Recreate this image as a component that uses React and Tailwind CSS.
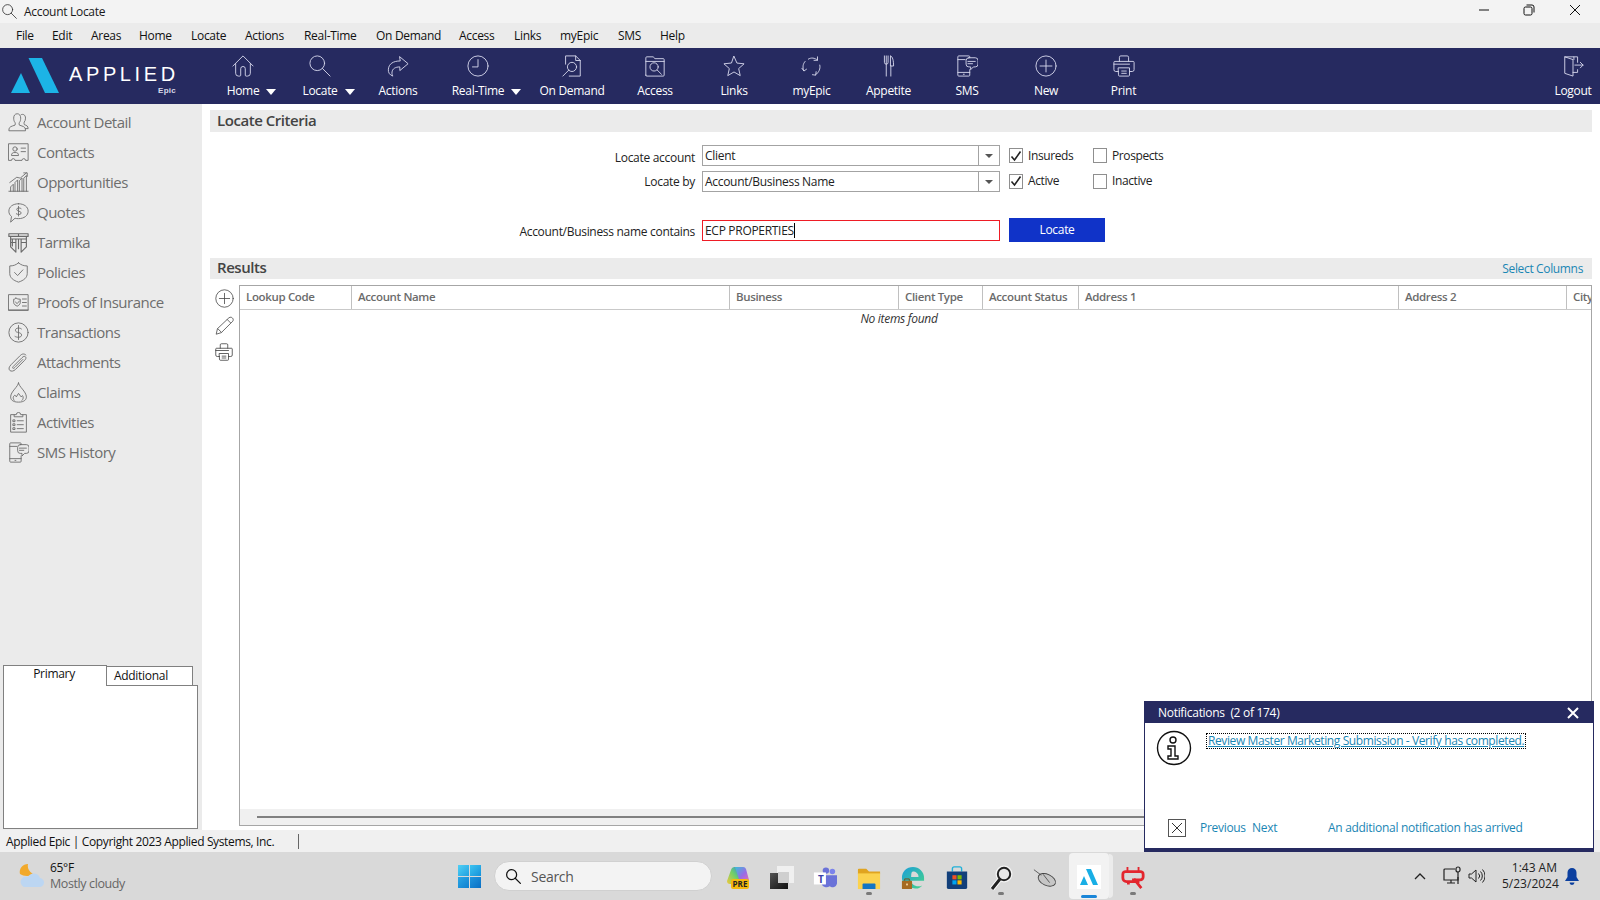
import React from 'react';

const S = ({ s = 24, className = '', sw = 1.1, vb = 24, children }) => (
  <svg width={s} height={s} viewBox={`0 0 ${vb} ${vb}`} fill="none" stroke="currentColor" strokeWidth={sw} strokeLinecap="round" strokeLinejoin="round" className={className}>
    {children}
  </svg>
);

const IHome = (p) => <S {...p}><path d="M1 12 12 1l11 11M4 9.500V20a3 3 0 0 0 3 3h1.500a1 1 0 0 0 1-1v-7a2.500 2.500 0 0 1 5 0v7a1 1 0 0 0 1 1H17a3 3 0 0 0 3-3V9.500" /></S>;
const ISearch = (p) => <S {...p}><circle cx="9" cy="9" r="8" /><path d="M14.700 14.700 23 23" /></S>;
const IShare = (p) => <S {...p}><path d="M14 2l9 7.500-9 7.500v-4c-5 0-8 2-8.500 5.500-.3 2 .2 3.500 1 4.500-3.500-1-5.500-4-5-7.500C2 9.500 7 6.500 14 6.500z" /></S>;
const IClock = (p) => <S {...p}><circle cx="12" cy="12" r="11" /><path d="M12 5v8H6" /></S>;
const IDocSearch = (p) => <S {...p}><path d="M5 10V1h11l5 5v17H9" /><path d="M16 1v5h5" /><circle cx="12" cy="13" r="5" /><path d="M8.500 16.500 2 23" /></S>;
const IFolderSearch = (p) => <S {...p}><path d="M2 22V3a1 1 0 0 1 1-1h7l2 2h9a1 1 0 0 1 1 1v17a1 1 0 0 1-1 1H3a1 1 0 0 1-1-1zM2 7h20" /><circle cx="11" cy="13" r="4.500" /><path d="M14.500 16.500 19 21" /></S>;
const IStar = (p) => <S {...p}><path d="M12 1.500l3.200 7.300 7.800.8-5.900 5.200 1.700 7.700-6.800-4-6.800 4 1.700-7.700L1 9.600l7.800-.8z" /></S>;
const ICycle = (p) => <S {...p}><path d="M8 4.500C11 2.500 15 3 18 5.500M18 2v3.800h-3.800M3 17c-1.500-3.500-1-7.500 1.500-10M1 14.500 3.200 17.500 6 15.500M20.500 11c1 4-1 8-4.500 10.500M12.500 21.500l3.500.5.500-3.800" /></S>;
const IFork = (p) => <S {...p}><path d="M7 1v7a2 2 0 0 0 4 0V1M9 1v22M14 1c2 1 3 5 3 11h-3zM14 12v11" /></S>;
const ISms = (p) => <S {...p}><path d="M15 3V2a1 1 0 0 0-1-1H3a1 1 0 0 0-1 1v20a1 1 0 0 0 1 1h11a1 1 0 0 0 1-1v-6M2 5h8M2 19h13M8 21h1" /><path d="M14 3h7a3 3 0 0 1 3 3v4a3 3 0 0 1-3 3h-2l-3 3v-3h-2a3 3 0 0 1-3-3V6a3 3 0 0 1 3-3zM13 7h8M13 9.500h5" /></S>;
const IPlus = (p) => <S {...p}><circle cx="12" cy="12" r="11" /><path d="M12 5.500v13M5.500 12h13" /></S>;
const IPrint = (p) => <S {...p}><path d="M7 7V2.500a1.500 1.500 0 0 1 1.500-1.500h7A1.500 1.500 0 0 1 17 2.500V7" /><path d="M6 18H3a2 2 0 0 1-2-2V8a1 1 0 0 1 1-1h20a1 1 0 0 1 1 1v8a2 2 0 0 1-2 2h-3M1 10h17" /><path d="M6 14h12v8a1 1 0 0 1-1 1H7a1 1 0 0 1-1-1zM9.500 17.500h5M9.500 20h5" /></S>;
const ILogout = (p) => <S {...p}><path d="M13 5V2H3v18l9 3V5L3 2M12 19h5v-3M17 8V2h-4M14 11h9M20 8l3 3-3 3" /></S>;

const IUsers = (p) => <S {...p}><path d="M1 21c0-3 1-4 4-5l3-1c.5-1 .5-2 0-3-1-1-1.500-3-1.500-5C6.500 4 8 2 10.500 2S14.500 4 14.500 7c0 2-.5 4-1.500 5-.5 1-.5 2 0 3l3 1c3 1 4 2 4 5zM15 3c2-1 5 0 5 4 0 2-.5 3.500-1.500 4.500-.3 1-.2 2 .2 3 2.500.8 4.300 1.500 4.300 4.500h-3" /></S>;
const IContact = (p) => <S {...p}><path d="M1 2h22v19h-3a2 2 0 0 0-4 0H8a2 2 0 0 0-4 0H1z" /><circle cx="8" cy="8" r="2.500" /><path d="M4 15c0-2 1-3 4-3s4 1 4 3zM15 7h5M15 11h5" /></S>;
const IChart = (p) => <S {...p}><path d="M1 22h22M3 22v-5l3-3v8M8 22V12l3-3v13M13 22V10l3-3v15M18 22V7l3-3v18M2 12 10 6l4 1 7-6M18 1h4v4" /></S>;
const IQuote = (p) => <S {...p}><path d="M12 2c6.500 0 11 3.500 11 8.500S18.500 19 12 19c-1.500 0-2.500 0-4-.5L3 23l1-6.500C2 15 1 13 1 10.500 1 5.500 5.500 2 12 2z" /><path d="M15 7.500c-1-1-5-1.500-5 1 0 2.500 5 1.500 5 4s-4 2-5.500 1M12 5v11" /></S>;
const ITarmika = (p) => <S {...p} sw={1.3}><path d="M1 2h22v3H1zM3 5v3h18V5M3 8v9l6 6V8M5 8v8M12 8v11M21 8v9l-6 6V8M15 12h6M3 12h6M12 5V2" /></S>;
const IShield = (p) => <S {...p}><path d="M12 1c3 2.500 6 3.500 10 3.500V13c0 5-4 8-10 10C6 21 2 18 2 13V4.500C6 4.500 9 3.500 12 1z" /><path d="M7.500 12l3.500 3.500 6-6.500" /></S>;
const IProof = (p) => <S {...p}><path d="M1 3h22v18H1zM1 20.500h22" /><path d="M9 7c1.500 1 3 1.200 5 1.200v4c0 2-2 3.300-3.500 4-1.500-.7-4-2-4-4v-4C8 8.200 8 8 9 7z" /><path d="M8.500 11.500l2 1.800 2.500-3M16.500 8H21M16.500 12H21M16.500 16H21" /></S>;
const IDollar = (p) => <S {...p}><circle cx="12" cy="12" r="11" /><path d="M15.500 8c-1-1.500-7-2-7 1.500 0 3.500 7 1.500 7 5.500 0 3-5.500 3-7.500 1.500M12 4v16" /></S>;
const IClip = (p) => <S {...p}><path d="M20.500 3.500c-2-2-4.500-1.500-6.500.5L3.500 14.500c-2.500 2.500-3 5-1.500 6.500s4.500 1 6.500-1L19 9.500c1.500-1.500 2-3 1-4s-2.500-.5-4 1L6.500 16c-1 1-1.500 2-1 2.500s1.500 0 2.500-1l9-9" /></S>;
const IFlame = (p) => <S {...p}><path d="M12 1c0 4-9 10-9 16 0 3 2 6 9 6s9-3 9-6c0-6-9-12-9-16z" /><path d="M7 21c-2-3-1-5 1-6l1.500 2 2.500-4 3 4 1.500-1.500c1.500 2 1 4-.5 5.500" /></S>;
const IList = (p) => <S {...p}><path d="M7 3H3v20h18V3h-4M7 5V3h2.500a2.500 2.500 0 0 1 5 0H17v2zM6 9h2v2H6zM6 13.500h2v2H6zM6 18h2v2H6zM10.500 10h7M10.500 14.500h7M10.500 19h7" /></S>;
const IPencil = (p) => <S {...p}><path d="M18 2c1.500-1 3-.5 4 .5s1.500 2.500.5 4L8 21l-6.500 2L3 16.500zM15.500 4.500l4 4M3.500 16l4.500 4.500" /></S>;

const menu = [
  ['File', 'w-[36px]'], ['Edit', 'w-[39px]'], ['Areas', 'w-[48px]'], ['Home', 'w-[52px]'], ['Locate', 'w-[54px]'], ['Actions', 'w-[59px]'],
  ['Real-Time', 'w-[72px]'], ['On Demand', 'w-[83px]'], ['Access', 'w-[55px]'], ['Links', 'w-[46px]'], ['myEpic', 'w-[58px]'], ['SMS', 'w-[42px]'], ['Help', 'w-[40px]'],
];

const nav = [
  ['Home', IHome, 'w-[76px]', true], ['Locate', ISearch, 'w-[78px]', true], ['Actions', IShare, 'w-[78px]'], ['Real-Time', IClock, 'w-[82px]', true],
  ['On Demand', IDocSearch, 'w-[106px]'], ['Access', IFolderSearch, 'w-[60px]'], ['Links', IStar, 'w-[98px]'], ['myEpic', ICycle, 'w-[57px]'],
  ['Appetite', IFork, 'w-[97px]'], ['SMS', ISms, 'w-[60px]'], ['New', IPlus, 'w-[98px]'], ['Print', IPrint, 'w-[57px]'],
];

const side = [
  ['Account Detail', IUsers], ['Contacts', IContact], ['Opportunities', IChart], ['Quotes', IQuote], ['Tarmika', ITarmika], ['Policies', IShield],
  ['Proofs of Insurance', IProof], ['Transactions', IDollar], ['Attachments', IClip], ['Claims', IFlame], ['Activities', IList], ['SMS History', ISms],
];

const cols = [
  ['Lookup Code', 'w-[112px]'], ['Account Name', 'w-[378px]'], ['Business', 'w-[169px]'], ['Client Type', 'w-[84px]'], ['Account Status', 'w-[96px]'],
  ['Address 1', 'w-[320px]'], ['Address 2', 'w-[168px]'],
];

const Check = ({ on, label, w }) => (
  <div className={`flex items-center gap-[5px] ${w}`}>
    <span className="w-[14px] h-[15px] border border-[#8f8f8f] bg-white flex items-center justify-center shrink-0">
      {on && <svg width="12" height="12" viewBox="0 0 12 12" fill="none" stroke="#222" strokeWidth="1.6"><path d="M1.500 6.500 4.500 10 10.500 1.500" /></svg>}
    </span>
    <span className="tracking-[-0.4px]">{label}</span>
  </div>
);

const Combo = ({ value }) => (
  <div className="w-[298px] h-[21px] border border-[#a3a3a3] bg-white flex items-center">
    <span className="flex-1 pl-[2px]">{value}</span>
    <span className="w-[21px] h-full border-l border-[#a3a3a3] flex items-center justify-center">
      <span className="w-0 h-0 border-l-[4px] border-r-[4px] border-t-[4px] border-l-transparent border-r-transparent border-t-[#555]" />
    </span>
  </div>
);

const Win11 = () => (
  <div className="grid grid-cols-2 gap-[1px] w-[23px] h-[23px]">
    <span className="bg-gradient-to-br from-[#4fd0f5] to-[#1fa0e0]" />
    <span className="bg-gradient-to-br from-[#3cc3f0] to-[#1592da]" />
    <span className="bg-gradient-to-br from-[#2ba8e6] to-[#0f7fcf]" />
    <span className="bg-gradient-to-br from-[#2096de] to-[#0a6fc4]" />
  </div>
);

const TaskIcon = ({ w, dot, children }) => (
  <div className={`${w} h-full flex flex-col items-center pt-[13px] relative`}>
    <div className="w-[24px] h-[25px] flex items-center justify-center">{children}</div>
    {dot && <span className="absolute bottom-[5px] w-[6px] h-[3px] rounded-full bg-[#7a7a7a]" />}
  </div>
);

export default function App() {
  return (
    <div className="relative w-[1600px] h-[900px] overflow-hidden flex flex-col bg-white text-[12px] text-[#222] tracking-[-0.3px] font-['Open_Sans',sans-serif]">
      {/* title bar */}
      <div className="h-[23px] bg-[#f3f3f3] flex items-center shrink-0">
        <ISearch s={15} sw={1.3} className="ml-[2px] text-[#333]" />
        <span className="ml-[7px] text-[#1a1a1a]">Account Locate</span>
        <div className="ml-auto flex items-center text-[#111] -mt-[3px]">
          <svg width="12" height="12" viewBox="0 0 12 12" stroke="currentColor" className="mr-[33px]"><path d="M1 6h10" /></svg>
          <svg width="12" height="12" viewBox="0 0 12 12" fill="none" stroke="currentColor" className="mr-[34px]"><rect x="1" y="3" width="8" height="8" rx="1.500" /><path d="M3.500 1h5.500a2 2 0 0 1 2 2v5.500" /></svg>
          <svg width="12" height="12" viewBox="0 0 12 12" stroke="currentColor" className="mr-[19px]"><path d="M1 1l10 10M11 1 1 11" /></svg>
        </div>
      </div>
      {/* menu */}
      <div className="h-[25px] bg-[#ebebeb] flex items-center pl-[16px] shrink-0 text-[#111]">
        {menu.map(([t, w]) => <span key={t} className={w}>{t}</span>)}
      </div>
      {/* nav */}
      <div className="h-[56px] bg-[#262a60] flex text-white shrink-0">
        <div className="w-[205px] relative shrink-0">
          <svg width="60" height="40" viewBox="0 0 60 40" className="absolute left-[0px] top-[8px]">
            <path d="M11 37 L21 17 L30 37Z" fill="#1cb4e6" />
            <path d="M28.500 2 H42 L59 37 H45Z" fill="#1cb4e6" />
          </svg>
          <span className="absolute left-[69px] top-[13px] text-[20px] leading-[26px] tracking-[3.6px] font-['Liberation_Sans',sans-serif]">APPLIED</span>
          <span className="absolute left-[158px] top-[37px] text-[8px] leading-[12px] font-bold text-[#d8d8e8] tracking-[0.3px] font-['Liberation_Sans',sans-serif]">Epic</span>
        </div>
        {nav.map(([t, Icon, w, caret]) => (
          <div key={t} className={`${w} shrink-0 flex flex-col items-center relative`}>
            <div className="h-[35px] flex items-center pt-[3px] pb-[2px] text-[#d6d8ec]"><Icon s={22} sw={1} /></div>
            <span className="leading-[16px] relative text-white">
              {t}
              {caret && <span className="absolute left-full ml-[7px] top-[6px] w-0 h-0 border-l-[5px] border-r-[5px] border-t-[6px] border-l-transparent border-r-transparent border-t-white" />}
            </span>
          </div>
        ))}
        <div className="ml-auto w-[54px] flex flex-col items-center">
          <div className="h-[35px] flex items-center pt-[3px] pb-[2px] text-[#d6d8ec]"><ILogout s={22} sw={1} /></div>
          <span className="leading-[16px]">Logout</span>
        </div>
      </div>
      {/* body */}
      <div className="flex-1 flex min-h-0">
        <aside className="w-[202px] bg-[#ebebeb] flex flex-col shrink-0">
          <div className="pt-[3px] flex flex-col">
            {side.map(([t, Icon]) => (
              <div key={t} className="h-[30px] flex items-center pl-[8px] text-[#6e6e6e]">
                <Icon s={21} sw={1} className="text-[#6a6a6a] shrink-0" />
                <span className="ml-[8px] text-[15px] tracking-[-0.5px]">{t}</span>
              </div>
            ))}
          </div>
          <div className="mt-auto mb-[1px] pl-[3px]">
            <div className="flex items-end h-[21px] relative z-10 -mb-[1px]">
              <div className="w-[104px] h-[21px] bg-white border border-b-0 border-[#808080] text-center leading-[15px] text-[#111] pr-[2px]">Primary</div>
              <div className="w-[86px] h-[20px] bg-white border border-l-0 border-[#808080] pl-[7px] leading-[17px] text-[#111]">Additional</div>
            </div>
            <div className="w-[195px] h-[144px] bg-white border border-[#808080]" />
          </div>
        </aside>
        <main className="flex-1 flex flex-col px-[8px] pt-[6px] pb-[4px] min-w-0">
          <div className="h-[22px] bg-[#ebebeb] flex items-center pl-[7px] pb-[2px] text-[15px] font-semibold text-[#444] shrink-0 tracking-[-0.45px]">Locate Criteria</div>
          <div className="pt-[13px] flex flex-col shrink-0">
            <div className="flex h-[21px] items-center">
              <span className="w-[485px] text-right pt-[4px]">Locate account</span>
              <div className="ml-[7px]"><Combo value="Client" /></div>
              <div className="ml-[9px] flex"><Check on label="Insureds" w="w-[84px]" /><Check label="Prospects" w="w-[90px]" /></div>
            </div>
            <div className="flex h-[21px] items-center mt-[5px]">
              <span className="w-[485px] text-right">Locate by</span>
              <div className="ml-[7px]"><Combo value="Account/Business Name" /></div>
              <div className="ml-[9px] flex -mt-[1px]"><Check on label="Active" w="w-[84px]" /><Check label="Inactive" w="w-[90px]" /></div>
            </div>
            <div className="flex items-center mt-[26px] h-[24px]">
              <span className="w-[485px] text-right pt-[3px]">Account/Business name contains</span>
              <div className="ml-[7px] w-[298px] h-[21px] border border-[#ee1c25] flex items-center pl-[2px] pt-[1px]">
                <span>ECP PROPERTIES</span><span className="w-px h-[15px] bg-black" />
              </div>
              <div className="ml-[9px] w-[96px] h-[24px] bg-[#1033c8] text-white flex items-center justify-center">Locate</div>
            </div>
          </div>
          <div className="mt-[16px] h-[21px] bg-[#ebebeb] flex items-center pl-[7px] pr-[9px] pb-[2px] shrink-0">
            <span className="text-[15px] font-semibold text-[#444] tracking-[-0.45px]">Results</span>
            <span className="ml-auto mt-[2px] text-[#1a86b4] tracking-[-0.35px]">Select Columns</span>
          </div>
          <div className="mt-[6px] flex-1 flex min-h-0">
            <div className="w-[29px] shrink-0 flex flex-col items-center pr-[1px] text-[#444]">
              <IPlus s={19} sw={1} className="mt-[4px]" />
              <IPencil s={19} sw={1} className="mt-[8px]" />
              <IPrint s={18} sw={1.1} className="mt-[8px]" />
            </div>
            <div className="flex-1 border border-[#a6a6a6] flex flex-col overflow-hidden">
              <div className="h-[24px] border-b border-[#c9c9c9] flex items-center shrink-0 font-semibold text-[#6b6b6b] text-[11.5px] tracking-[-0.35px]">
                {cols.map(([t, w]) => (
                  <div key={t} className={`${w} h-full shrink-0 border-r border-[#c0c0c0] pl-[6px] pb-[1px] flex items-center`}>{t}</div>
                ))}
                <div className="flex-1 pl-[6px] pb-[1px] overflow-hidden">City</div>
              </div>
              <div className="w-[1318px] text-center italic text-[#333] leading-[15px] pt-[1px]">No items found</div>
              <div className="mt-auto h-[16px] bg-[#f0f0f0] flex items-center pl-[17px]">
                <div className="h-[2px] w-[1100px] bg-[#808080]" />
              </div>
            </div>
          </div>
        </main>
      </div>
      {/* status */}
      <div className="h-[21px] bg-[#f0f0f0] border-b border-[#a8a8a8] flex items-center pl-[6px] pt-[1px] shrink-0 text-[#111] box-content -mb-px">
        <span className="w-[292px] tracking-[-0.36px]">Applied Epic | Copyright 2023 Applied Systems, Inc.</span>
        <span className="w-px h-[15px] bg-[#666]" />
      </div>
      {/* taskbar */}
      <div className="h-[48px] bg-[#d9d9d9] flex items-stretch shrink-0 relative">
        <div className="w-[441px] flex items-center pl-[19px] shrink-0">
          <svg width="25" height="26" viewBox="0 0 25 26">
            <path d="M9 1a8 8 0 0 0-8 10c2 1 4 2 7 2a8 8 0 0 0 6-2A9 9 0 0 1 9 1z" fill="#f2a92b" />
            <path d="M5 24h15a4.500 4.500 0 0 0 1-9 6.500 6.500 0 0 0-12-1 5 5 0 0 0-4 10z" fill="#bcd6f2" />
          </svg>
          <div className="ml-[6px] flex flex-col leading-[16px]">
            <span className="text-[#111]">65°F</span>
            <span className="text-[12.5px] text-[#666] tracking-[-0.4px]">Mostly cloudy</span>
          </div>
        </div>
        <div className="w-[53px] flex items-center justify-center pl-[9px] pr-[5px] shrink-0"><Win11 /></div>
        <div className="my-[9px] w-[218px] h-[30px] rounded-full bg-[#f3f3f3] border border-[#d0d0d0] flex items-center pl-[11px] shrink-0 text-[14px] text-[#555]">
          <ISearch s={15} sw={2} className="text-[#111]" />
          <span className="ml-[10px]">Search</span>
        </div>
        <div className="ml-[4px] flex">
          <TaskIcon w="w-[44px]">
            <svg width="24" height="18" viewBox="0 0 24 18" className="-mt-[6px]">
              <defs>
                <linearGradient id="cp" x1="0" y1="0" x2="1" y2="1"><stop offset="0" stopColor="#35c4d8" /><stop offset="0.55" stopColor="#9a6be6" /><stop offset="1" stopColor="#f06fa8" /></linearGradient>
                <linearGradient id="cp2" x1="0" y1="1" x2="1" y2="0"><stop offset="0" stopColor="#f0c93a" /><stop offset="0.55" stopColor="#6fcf6a" /><stop offset="1" stopColor="#2d8be0" /></linearGradient>
              </defs>
              <path d="M8 1h9a3 3 0 0 1 3 2l3 11a3 3 0 0 1-3 3h-7z" fill="url(#cp)" />
              <path d="M5 4a4 4 0 0 1 4-3l5 15a2 2 0 0 1-2 2H4a3 3 0 0 1-3-3z" fill="url(#cp2)" />
            </svg>
            <span className="absolute top-[27px] left-[15px] w-[18px] h-[10px] rounded-[2px] bg-[#f5b90f] text-[8px] leading-[10px] text-center font-bold text-[#222] tracking-normal">PRE</span>
          </TaskIcon>
          <TaskIcon w="w-[43px]">
            <div className="relative w-[24px] h-[23px]">
              <div className="absolute right-0 top-0 w-[17px] h-[17px] bg-[#f0f0f0]" />
              <div className="absolute left-0 bottom-0 w-[18px] h-[16px] bg-gradient-to-br from-[#555] to-[#111]" />
              <div className="absolute left-[8px] top-[6px] w-[11px] h-[11px] bg-[#cfcfcf]" />
            </div>
          </TaskIcon>
          <TaskIcon w="w-[44px]">
            <svg width="26" height="26" viewBox="0 0 26 26">
              <circle cx="21" cy="6" r="3" fill="#7b83eb" />
              <circle cx="14" cy="5" r="3.500" fill="#6a72d8" />
              <path d="M9 10h17v9a5 5 0 0 1-8 3 6 6 0 0 1-9-3z" fill="#6a72d8" />
              <rect x="1" y="7" width="13" height="13" fill="#fff" />
            </svg>
            <span className="absolute top-[21px] left-[15px] w-[10px] text-[10px] leading-[12px] font-bold text-[#3a41a8] tracking-normal">T</span>
          </TaskIcon>
          <TaskIcon w="w-[44px]" dot>
            <svg width="26" height="26" viewBox="0 0 26 26">
              <path d="M1 4a1 1 0 0 1 1-1h8l3 3h12v3H1z" fill="#e0a420" />
              <path d="M1 8h24v17H1z" fill="#fbd24e" />
              <path d="M7 19h12a1 1 0 0 1 1 1v5H6v-5a1 1 0 0 1 1-1z" fill="#1275c4" />
            </svg>
          </TaskIcon>
          <TaskIcon w="w-[44px]">
            <svg width="26" height="26" viewBox="0 0 26 26">
              <defs><linearGradient id="ed" x1="0" y1="0" x2="1" y2="1"><stop offset="0" stopColor="#1c9fd8" /><stop offset="1" stopColor="#46d38a" /></linearGradient></defs>
              <path d="M13 1a12 12 0 0 1 12 12v3H11c0 3 3 6 8 6 2 0 3-.5 4-1-2 3-6 4-9 3C6 23 1 18 1 13 1 6 6 1 13 1z" fill="url(#ed)" />
              <path d="M13 6c3 0 6 2 6 6h-8c0-2 0-6 2-6z" fill="#d9d9d9" />
              <rect x="1" y="16" width="11" height="9" rx="1" fill="#a56a22" />
              <path d="M4 16v-2h5v2" stroke="#7a4b14" fill="none" />
              <rect x="5.500" y="19" width="2" height="2" fill="#f2d19a" />
            </svg>
          </TaskIcon>
          <TaskIcon w="w-[44px]">
            <svg width="26" height="26" viewBox="0 0 26 26">
              <path d="M8 6V3a2 2 0 0 1 2-2h6a2 2 0 0 1 2 2v3" stroke="#20b0d8" strokeWidth="1.500" fill="none" />
              <path d="M2 6h22v17a2 2 0 0 1-2 2H4a2 2 0 0 1-2-2z" fill="#123f7a" />
              <rect x="8" y="10" width="4.500" height="4.500" fill="#f25022" /><rect x="13.500" y="10" width="4.500" height="4.500" fill="#7fba00" />
              <rect x="8" y="15.500" width="4.500" height="4.500" fill="#00a4ef" /><rect x="13.500" y="15.500" width="4.500" height="4.500" fill="#ffb900" />
            </svg>
          </TaskIcon>
          <TaskIcon w="w-[44px]" dot>
            <svg width="24" height="26" viewBox="0 0 24 26" fill="none">
              <path d="M11 14 3 24" stroke="#fff" strokeWidth="5" />
              <circle cx="15" cy="9" r="7.500" stroke="#f5f5f5" strokeWidth="2" />
              <circle cx="15" cy="9" r="6.200" stroke="#222" strokeWidth="2" fill="#e8e8e8" />
              <path d="M11 14 3 24" stroke="#222" strokeWidth="3" />
            </svg>
          </TaskIcon>
          <TaskIcon w="w-[44px]">
            <svg width="26" height="20" viewBox="0 0 26 20" fill="none">
              <ellipse cx="15" cy="12" rx="10" ry="6" transform="rotate(25 15 12)" fill="#c6c6c6" stroke="#444" />
              <path d="M1 1l8 6M11 6l7 9" stroke="#555" />
            </svg>
          </TaskIcon>
          <div className="w-[40px] h-[46px] mt-[1px] ml-[2px] bg-[#f2f2f2] rounded-[4px] flex flex-col items-center pt-[12px] relative">
            <div className="w-[24px] h-[24px] bg-white flex items-center justify-center">
              <svg width="20" height="16" viewBox="0 0 20 16"><path d="M1 16 5 7l4 9zM7 0h5l7 16h-5z" fill="#18aee5" /></svg>
            </div>
            <span className="absolute bottom-[1px] w-[16px] h-[3px] rounded-full bg-[#1a86d8]" />
            <span className="absolute -right-[4px] top-[1px] bottom-[1px] w-[4px] rounded-r-[4px] bg-[#ececec]" />
          </div>
          <TaskIcon w="w-[48px]" dot>
            <svg width="24" height="24" viewBox="0 0 26 26" fill="none" stroke="#e3262e" strokeWidth="3">
              <path d="M7 1v5M19 1v5" strokeWidth="2" />
              <path d="M20 17H6a4 4 0 0 1-4-4V9a3 3 0 0 1 3-3h16a3 3 0 0 1 3 3v3a3 3 0 0 1-3 3h-9" />
              <path d="M14 14l8 10M8 17v3" />
            </svg>
          </TaskIcon>
        </div>
        <div className="absolute right-0 top-0 bottom-0 flex items-center text-[#222]">
          <svg width="16" height="10" viewBox="0 0 16 10" fill="none" stroke="#222" strokeWidth="1.300" className="mr-[15px]"><path d="M3 8 8 3l5 5" /></svg>
          <svg width="20" height="20" viewBox="0 0 20 20" fill="none" stroke="#222" strokeWidth="1.200" className="mr-[5px]"><path d="M12 3H2a1 1 0 0 0-1 1v10h14v-3M8 14v3M4 17h8" /><rect x="13" y="1" width="4" height="5" rx="2" /><path d="M15 6v12" /></svg>
          <svg width="17" height="18" viewBox="0 0 17 18" fill="none" stroke="#222" strokeWidth="1" className="mr-[17px]"><path d="M1 7v4h2.500L8 15V3L3.500 7zM10.500 6.500a3.500 3.500 0 0 1 0 5M12.500 4.500a6.500 6.500 0 0 1 0 9M14.500 2.500a9.500 9.500 0 0 1 0 13" /></svg>
          <div className="w-[55px] text-right leading-[16px] tracking-[0px]">
            <div>1:43 AM</div><div>5/23/2024</div>
          </div>
          <svg width="14" height="17" viewBox="0 0 14 17" fill="#0b3f9f" className="ml-[8px] mr-[21px]"><path d="M7 0a4.500 4.500 0 0 0-4.500 4.500V9L0 13h14l-2.500-4V4.500A4.500 4.500 0 0 0 7 0zM4.500 14.500a2.500 2.500 0 0 0 5 0z" /></svg>
        </div>
      </div>
      {/* notification overlay */}
      <div className="absolute left-[1144px] top-[701px] w-[450px] h-[151px] bg-white border-x border-x-[#262a60] border-b-[4px] border-b-[#262a60] flex flex-col">
        <div className="h-[22px] -mx-px bg-[#262a60] text-white flex items-center pl-[14px] pr-[15px] pt-[1px] shrink-0">
          <span className="whitespace-pre">Notifications  (2 of 174)</span>
          <svg width="12" height="12" viewBox="0 0 12 12" stroke="#fff" strokeWidth="2" className="ml-auto"><path d="M1 1l10 10M11 1 1 11" /></svg>
        </div>
        <div className="flex pl-[11px] pt-[7px]">
          <svg width="36" height="36" viewBox="0 0 36 36" fill="none" stroke="#111" strokeWidth="1.400">
            <circle cx="18" cy="18" r="16.500" />
            <circle cx="17" cy="10" r="3" />
            <path d="M12 16h7v10h3v3H12v-3h3v-7h-3z" />
          </svg>
          <span className="ml-[14px] mt-[3px] h-[16px] px-[1px] border border-dotted border-black leading-[14px] text-[#1a86b4] underline whitespace-nowrap tracking-[-0.4px]">Review Master Marketing Submission - Verify has completed.</span>
        </div>
        <div className="mt-auto flex items-center pl-[23px] pb-[11px] text-[#1a86b4]">
          <span className="w-[18px] h-[18px] border border-[#555] flex items-center justify-center text-[#333] shrink-0">
            <svg width="10" height="10" viewBox="0 0 10 10" stroke="currentColor"><path d="M0 0l10 10M10 0 0 10" /></svg>
          </span>
          <span className="ml-[14px] w-[52px]">Previous</span>
          <span className="w-[76px]">Next</span>
          <span className="tracking-[-0.3px]">An additional notification has arrived</span>
        </div>
      </div>
    </div>
  );
}
